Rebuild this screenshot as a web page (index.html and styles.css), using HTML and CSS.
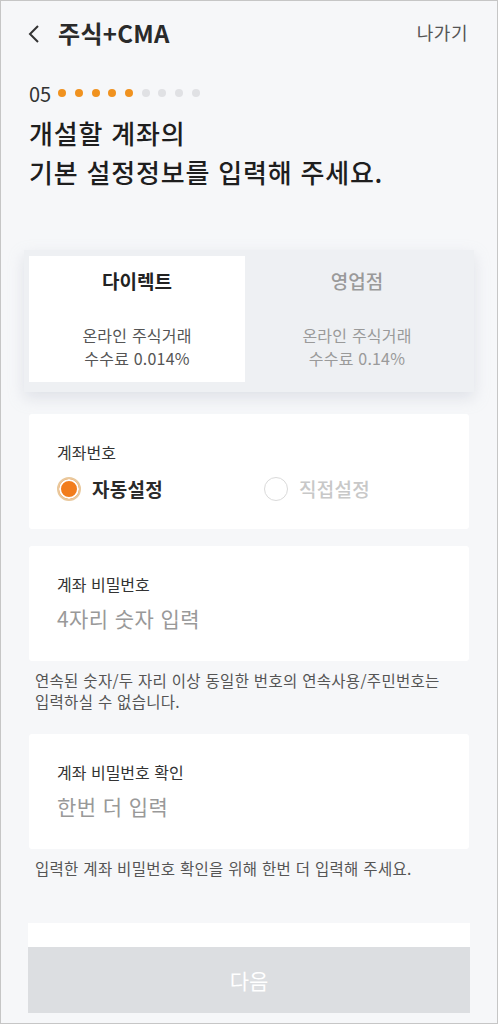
FILE: index.html
```html
<!DOCTYPE html>
<html lang="ko">
<head>
<meta charset="utf-8">
<meta name="viewport" content="width=device-width, initial-scale=1">
<title>주식+CMA</title>
<link rel="stylesheet" href="styles.css">
</head>
<body>
<div class="screen">
  <div class="header">
    <svg class="back" width="14" height="20" viewBox="0 0 14 20">
      <path d="M11 2 L3 10 L11 18" fill="none" stroke="#333" stroke-width="2"/>
    </svg>
    <span class="title">주식+CMA</span>
    <span class="exit">나가기</span>
  </div>

  <div class="progress">
    <span class="step">05</span>
    <span class="dot on"></span><span class="dot on"></span><span class="dot on"></span><span class="dot on"></span><span class="dot on"></span>
    <span class="dot"></span><span class="dot"></span><span class="dot"></span><span class="dot"></span>
  </div>

  <h1 class="heading">개설할 계좌의<br>기본 설정정보를 입력해 주세요.</h1>

  <div class="tabs">
    <div class="tab selected">
      <div class="tab-name">다이렉트</div>
      <div class="tab-desc">온라인 주식거래<br>수수료 0.014%</div>
    </div>
    <div class="tab">
      <div class="tab-name">영업점</div>
      <div class="tab-desc">온라인 주식거래<br>수수료 0.14%</div>
    </div>
  </div>

  <div class="card">
    <div class="label">계좌번호</div>
    <div class="radios">
      <div class="radio checked"><span class="circle"></span>자동설정</div>
      <div class="radio"><span class="circle"></span>직접설정</div>
    </div>
  </div>

  <div class="card">
    <div class="label">계좌 비밀번호</div>
    <div class="placeholder">4자리 숫자 입력</div>
  </div>
  <p class="note">연속된 숫자/두 자리 이상 동일한 번호의 연속사용/주민번호는<br>입력하실 수 없습니다.</p>

  <div class="card">
    <div class="label">계좌 비밀번호 확인</div>
    <div class="placeholder">한번 더 입력</div>
  </div>
  <p class="note">입력한 계좌 비밀번호 확인을 위해 한번 더 입력해 주세요.</p>

  <div class="bottom">
    <button class="next">다음</button>
  </div>
</div>
</body>
</html>
```

FILE: styles.css
```css
body {
    margin: 0;
    font-family: "Noto Sans CJK KR", "Noto Sans", sans-serif;
    color: #222;
}

.screen {
    position: relative;
    width: 498px;
    height: 1024px;
    box-sizing: border-box;
    border: 1px solid #c6c6c6;
    background: #f6f7f9;
    overflow: hidden;
}

.header {
    display: flex;
    align-items: center;
    height: 62px;
    padding: 0 29px 6px 26px;
}

.back {
    margin-right: 17px;
    margin-top: 3px;
}

.title {
    font-size: 24px;
    font-weight: 700;
    letter-spacing: 0.3px;
    color: #2a2a2a;
    flex: 1;
}

.exit {
    font-size: 18px;
    letter-spacing: 0.5px;
    color: #555;
}

.progress {
    display: flex;
    align-items: center;
    padding: 11px 28px 0;
    height: 26px;
}

.step {
    font-size: 20px;
    color: #333;
    margin-right: 7px;
}

.dot {
    width: 8px;
    height: 8px;
    border-radius: 50%;
    background: #e0e1e4;
    margin-right: 8.7px;
}

.dot.on {
    background: #f0921f;
}

.heading {
    margin: 7px 28px 0;
    font-size: 26px;
    font-weight: 500;
    letter-spacing: 0.8px;
    line-height: 39px;
    color: #1e1e1e;
}

.tabs {
    display: flex;
    margin: 59px 23px 0;
    padding: 6px 5px 10px;
    background: #eef0f3;
    box-shadow: 0 6px 14px rgba(180, 186, 200, 0.35);
}

.tab {
    flex: 1;
    text-align: center;
    height: 126px;
    color: #9a9a9a;
}

.tab.selected {
    flex: 0 0 216px;
    background: #fff;
    color: #555;
}

.tab-name {
    font-size: 19px;
    font-weight: 500;
    padding-top: 12px;
    line-height: 26px;
}

.tab.selected .tab-name {
    font-weight: 700;
    color: #222;
}

.tab-desc {
    margin-top: 30px;
    font-size: 16px;
    letter-spacing: 0.2px;
    line-height: 23px;
}

.card {
    margin: 22px 28px 0;
    height: 115px;
    padding: 26px 28px 0;
    box-sizing: border-box;
    background: #fff;
    border-radius: 3px;
}

.card + .card {
    margin-top: 17px;
}

.label {
    font-size: 16px;
    line-height: 24px;
    color: #333;
}

.radios {
    display: flex;
    margin-top: 11px;
}

.radio {
    display: flex;
    align-items: center;
    flex: 0 0 auto;
    font-size: 19px;
    font-weight: 700;
    letter-spacing: 0.3px;
    color: #2a2a2a;
}

.radio.checked {
    width: 207px;
}

.radio .circle {
    width: 24px;
    height: 24px;
    border: 1.5px solid #dadada;
    border-radius: 50%;
    margin-right: 11px;
    box-sizing: border-box;
}

.radio.checked .circle {
    border: 2px solid #e9c89c;
    background: #f27d1d;
    box-shadow: inset 0 0 0 2px #fff;
}

.radio:not(.checked) {
    font-weight: 500;
    color: #c8c8c8;
}

.placeholder {
    margin-top: 8px;
    font-size: 21px;
    letter-spacing: 0.4px;
    line-height: 28px;
    color: #999;
}

.note {
    margin: 9px 34px 0;
    font-size: 15.5px;
    letter-spacing: 0.3px;
    line-height: 21px;
    color: #555;
}

.bottom {
    position: absolute;
    left: 27px;
    right: 27px;
    bottom: 10px;
    padding-top: 24px;
    background: #fff;
}

.next {
    display: block;
    width: 100%;
    height: 66px;
    border: 0;
    background: #dcdee1;
    color: #fff;
    font-family: inherit;
    font-size: 21px;
}
```
